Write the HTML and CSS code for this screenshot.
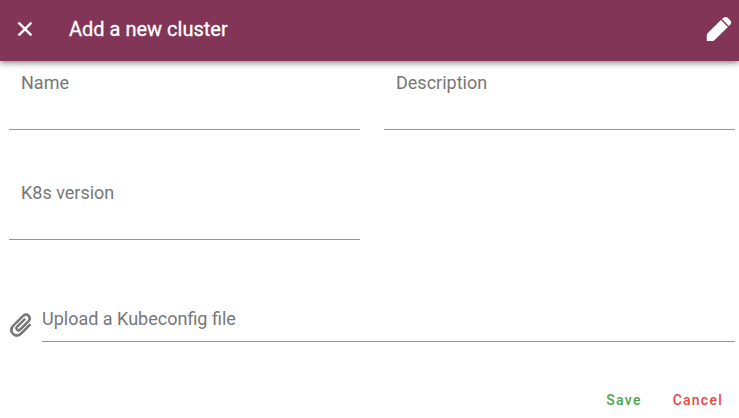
FILE: index.html
```html
<!DOCTYPE html>
<html lang="en">
<head>
<meta charset="utf-8">
<title>Add a new cluster</title>
<link rel="stylesheet" href="styles.css">
</head>
<body>
<header class="toolbar">
  <svg class="icon close" viewBox="0 0 24 24"><path d="M19,6.41L17.59,5L12,10.59L6.41,5L5,6.41L10.59,12L5,17.59L6.41,19L12,13.41L17.59,19L19,17.59L13.41,12L19,6.41Z"/></svg>
  <h1 class="title">Add a new cluster</h1>
  <svg class="icon pencil" viewBox="0 0 26 26"><path d="M14.9 4.1L21.9 11.1L8.4 24.3Q7.7 25 6.7 25H.8V19.3Q.8 18.1 1.6 17.3ZM15.9 3.1L17.8 1.5Q19.8 .2 21.7 1.8L24.5 4.6Q26 6.5 24.5 8.4L22.9 10.1Z"/></svg>
</header>
<main class="form">
  <div class="grid">
    <div class="field"><span class="label">Name</span></div>
    <div class="field"><span class="label">Description</span></div>
    <div class="field"><span class="label">K8s version</span></div>
  </div>
  <div class="upload">
    <svg class="icon clip" viewBox="0 0 24 24"><path d="M16.5,6V17.5A4,4 0 0,1 12.5,21.5A4,4 0 0,1 8.5,17.5V5A2.5,2.5 0 0,1 11,2.5A2.5,2.5 0 0,1 13.5,5V15.5A1,1 0 0,1 12.5,16.5A1,1 0 0,1 11.5,15.5V6H10V15.5A2.5,2.5 0 0,0 12.5,18A2.5,2.5 0 0,0 15,15.5V5A4,4 0 0,0 11,1A4,4 0 0,0 7,5V17.5A5.5,5.5 0 0,0 12.5,23A5.5,5.5 0 0,0 18,17.5V6H16.5Z"/></svg>
    <div class="file"><span class="label">Upload a Kubeconfig file</span></div>
  </div>
</main>
<footer class="actions"><span class="save">Save</span><span class="cancel">Cancel</span></footer>
</body>
</html>
```
FILE: styles.css
```css
* { box-sizing: border-box; }
body { margin: 0; width: 739px; height: 418px; overflow: hidden; background: #fff; font-family: Roboto, sans-serif; }
.toolbar { display: flex; align-items: center; height: 61px; padding: 0 7px 3px 13px; background: #833557; color: #fff; box-shadow: 0 2px 4px -1px rgba(0,0,0,.3), 0 4px 5px rgba(0,0,0,.14), 0 1px 10px rgba(0,0,0,.12); }
.icon { display: block; flex: none; fill: currentColor; }
.close { width: 24px; height: 24px; stroke: currentColor; stroke-width: .5px; }
.title { flex: 1; margin: 0 0 0 32px; font-size: 20px; line-height: 24px; font-weight: 400; -webkit-text-stroke: .3px currentColor; }
.pencil { width: 26px; height: 26px; }
.form { padding: 0 4px 0 9px; }
.grid { display: grid; grid-template-columns: 351px 351px; column-gap: 24px; row-gap: 41px; }
.field { height: 69px; padding: 10px 12px 0; border-bottom: 1px solid #949494; }
.label { display: block; font-size: 18px; line-height: 24px; color: #777; }
.upload { display: flex; margin-top: 66px; }
.clip { width: 28px; height: 28px; margin: 5px 7px 0 -2px; overflow: visible; color: #757575; stroke: currentColor; stroke-width: .8px; transform: rotate(45deg); }
.file { flex: 1; height: 36px; padding-top: 1px; border-bottom: 1px solid #949494; }
.actions { display: flex; justify-content: flex-end; gap: 31px; margin-top: 48px; padding-right: 16px; font-size: 14px; line-height: 20px; font-weight: 500; letter-spacing: 1.25px; }
.save { color: #4ba64f; }
.cancel { color: #e94848; }
```
